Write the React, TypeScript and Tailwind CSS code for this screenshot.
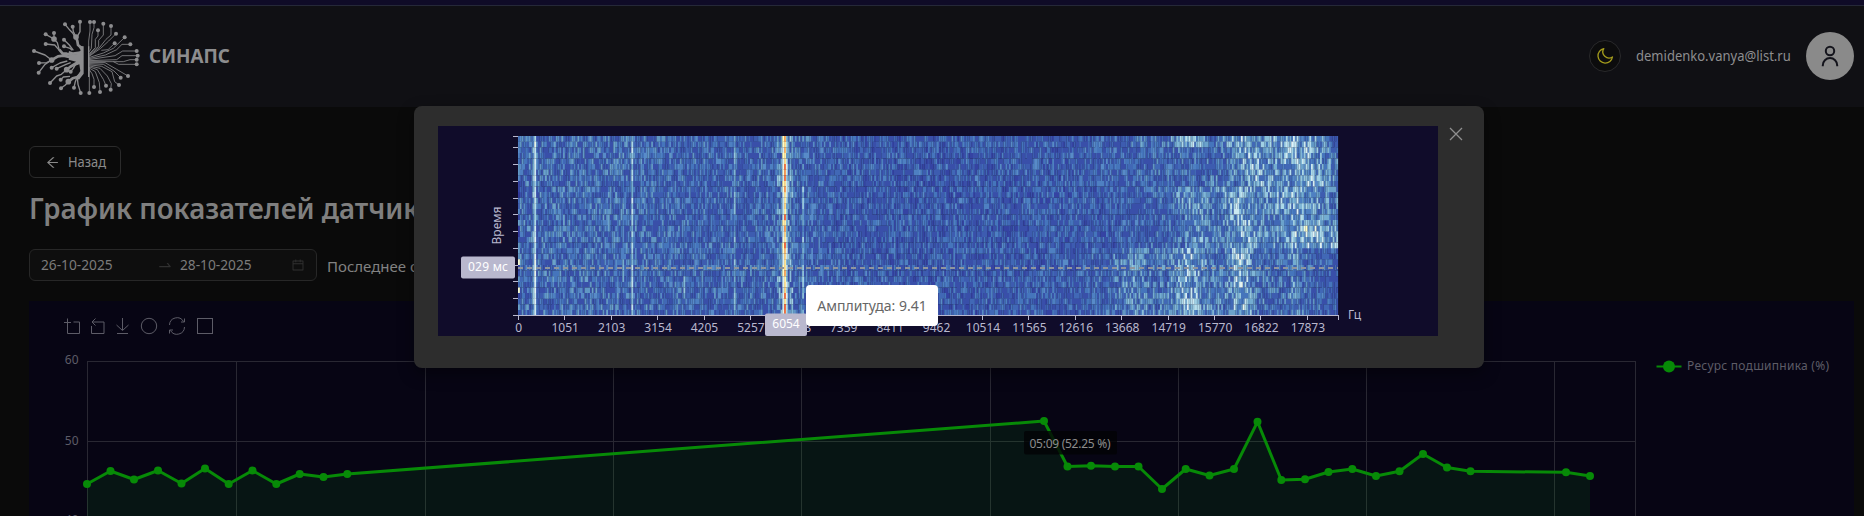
import { AiOutlineArrowLeft, AiOutlineCalendar, AiOutlineSwapRight } from "react-icons/ai";

const FONT = "font-['Noto_Sans','Open_Sans',sans-serif]";

/* ---------- heatmap ---------- */

const COLS = 456;
const ROWS = 32;
const PALETTE = [
  [49, 54, 149],
  [69, 117, 180],
  [116, 173, 209],
  [171, 217, 233],
  [224, 243, 248],
  [255, 255, 191],
  [254, 224, 144],
  [253, 174, 97],
  [244, 109, 67],
  [215, 48, 39],
];
const LEVELS = 45;

function levelColor(level: number) {
  const t = (level / LEVELS) * (PALETTE.length - 1);
  const i = Math.min(Math.floor(t), PALETTE.length - 2);
  const f = t - i;
  const c = PALETTE[i].map((v, k) => Math.round(v + (PALETTE[i + 1][k] - v) * f));
  // the low end of the scale is a little more saturated
  if (t < 1.5) c[2] = Math.min(255, c[2] + 8);
  return `rgb(${c.join(",")})`;
}

const bell = (x: number, center: number, width: number) =>
  Math.exp(-((x - center) ** 2) / (2 * width * width));

// x is counted in pixels from the left edge of the grid
function energy(x: number, row: number) {
  let e = 0.68 + 0.26 * bell(x, 60, 100) + 0.14 * bell(x, 265, 30);
  if (row < 9) {
    e += 0.4 * bell(x, 770, 100);
    e += 0.9 * bell(x, 722 + row * 2.4, 12);
    e += 1.0 * bell(x, 772 + row * 2.6, 18);
    if (row < 2) e += 1.3 * bell(x, 670, 11) + 0.6 * bell(x, 622, 4);
  } else if (row < 20) {
    const r = row - 9;
    e += 0.5 * bell(x, 760, 75);
    e += 0.9 * bell(x, 716 + r * 1.4, 11);
    e += 0.9 * bell(x, 772 + r * 2.2, 17);
    e += 0.5 * bell(x, 668 + r * 1.5, 12);
    if (r > 6) e += 0.6 * bell(x, 800, 20);
  } else {
    e += 0.45 * bell(x, 690, 65);
    e += 1.0 * bell(x, 670, 10);
    e += 1.2 * bell(x, 722, 7);
    e += 0.45 * bell(x, 612, 12) + 0.5 * bell(x, 776, 6);
  }
  return e;
}

function buildHeatmap() {
  let seed = 20251026;
  const rand = () => {
    seed = (seed * 1664525 + 1013904223) >>> 0;
    return seed / 4294967296;
  };
  const w = 820 / COLS;
  const h = 179.4 / ROWS;
  const paths: string[] = Array.from({ length: LEVELS + 1 }, () => "");
  const at = (px: number) => Math.round(px / w);
  const peak = at(267);
  for (let row = 0; row < ROWS; row++) {
    for (let col = 0; col < COLS; col++) {
      const x = col * w;
      let v = energy(x, row) * (0.36 + 1.4 * Math.pow(rand(), 1.8)) * 0.125;
      const n = rand();
      if (col === at(17)) v = 0.3 + n * 0.18;
      if (col === at(17) - 1) v = 0.12 + n * 0.2;
      if (col === at(112.5)) v = 0.18 + n * 0.22;
      if (col === at(104) && row > 10 && row < 26) v = 0.12 + n * 0.14;
      if (col === at(216.5)) v = 0.12 + n * 0.18;
      if (col === at(166) && row > 24 && row < 29) v = 0.2 + n * 0.1;
      if (col === at(284) && row > 6) v = 0.08 + n * 0.24;
      if (Math.abs(col - peak) > 1 && Math.abs(col - peak) < 5 && n > 0.5) v += 0.14;
      if (col === peak - 1) v = 0.36 + n * 0.24;
      if (col === peak) v = 0.6 + n * n * 0.34;
      if (col === peak + 1) v = 0.16 + n * 0.28;
      if (col === 0) v = row === 22 || row === 27 ? 0.5 : 0.2 * n;
      const level = Math.min(LEVELS, Math.round(Math.min(v, 1) * LEVELS));
      paths[level] += `M${x.toFixed(1)} ${(row * h).toFixed(1)}h${(w + 0.1).toFixed(1)}v${(h + 0.1).toFixed(1)}h-${(w + 0.1).toFixed(1)}z`;
    }
  }
  return paths;
}

const HEATMAP = buildHeatmap();

const FREQS = [
  0, 1051, 2103, 3154, 4205, 5257, 6308, 7359, 8411, 9462, 10514, 11565, 12616, 13668, 14719, 15770,
  16822, 17873,
];
const TIME_TICKS = [136.5, 147.5, 164.5, 181.5, 198.5, 214.5, 231.5, 248.5, 265.5, 281.5, 298.5, 315.5];

function Spectrogram() {
  return (
    <svg className="block h-[210px] w-[1000px] shrink-0 bg-[#100c2a]" viewBox="438 126 1000 210">
      <g transform="translate(518 136)">
        {HEATMAP.map((d, i) => d && <path key={i} d={d} fill={levelColor(i)} />)}
      </g>
      <g stroke="#b9b8ce" strokeWidth="1">
        <path d="M518 315.5H1338.5" />
        {TIME_TICKS.map((y) => (
          <path key={y} d={`M513 ${y}h5`} />
        ))}
        {FREQS.map((f, i) => (
          <path key={f} d={`M${Math.round(518 + i * 46.4) + 0.5} 315v5`} />
        ))}
        <path d="M1338.5 315v5" />
      </g>
      <path d="M518 268H1338" stroke="#8f959e" strokeWidth="2" strokeDasharray="5 4" />
      <g fill="#b9b8ce" fontSize="12">
        {FREQS.map((f, i) => (
          <text key={f} x={518.8 + i * 46.42} y="332" textAnchor="middle">
            {f}
          </text>
        ))}
        <text x="1348" y="318.5">Гц</text>
        <text x="500.5" y="225.5" textAnchor="middle" transform="rotate(-90 500.5 225.5)">
          Время
        </text>
      </g>
      <rect x="461" y="256.5" width="54" height="22" rx="2" fill="#b9b8ce" />
      <text x="488" y="270.5" fontSize="12" fill="#fff" textAnchor="middle" textLength="40">
        029 мс
      </text>
      <rect x="765" y="313.5" width="42" height="22.5" rx="2" fill="#b9b8ce" />
      <text x="786" y="328" fontSize="12" fill="#fff" textAnchor="middle">
        6054
      </text>
    </svg>
  );
}

/* ---------- resource chart ---------- */

const POINTS = [
  [87, 484], [110.5, 471], [134, 479.5], [158, 470.5], [181.5, 483.5], [205, 468.5], [228.7, 484],
  [252.5, 470.5], [276.3, 484], [299.7, 474], [323.5, 477], [347.3, 474], [1044, 421], [1067.5, 466.5],
  [1091, 465.8], [1115, 466.5], [1138.5, 466.5], [1162, 489], [1185.7, 469], [1209.5, 475.5],
  [1234, 469], [1257.5, 421.8], [1281.3, 480], [1305, 479.3], [1328.5, 472], [1352.3, 469],
  [1376, 476], [1399.5, 471.2], [1423, 454], [1447, 467.5], [1470.5, 471.3], [1566, 472.3], [1590, 476],
];
const LINE = POINTS.map((p) => p.join(",")).join(" ");
const GRID_X = [87.5, 236.5, 425.5, 613.5, 801.5, 990.5, 1178.5, 1366.5, 1554.5, 1635.5];

function ResourceChart() {
  return (
    <svg className="block h-[215px] w-[1825px] bg-[#070514]" viewBox="29 301 1825 215">
      <g fill="none" stroke="#5d5c67" strokeWidth="1">
        <path d="M67.5 318.5v15h12v-11.5h-6M64 322.5h7" />
        <path d="M91.5 326v7.5h12.5v-11.5h-12M95.5 318.5l-3.5 3.5l3.5 3.5" />
        <path d="M117 333.5h11M122.5 318v12M116.5 325l6 5.5l6-5.5" />
        <circle cx="149" cy="326" r="7.7" />
        <path d="M169.5 325a7.5 7.5 0 0 1 14-3.5M184.500 327a7.5 7.5 0 0 1-14 3.5M184.500 318.5v3.5h-3.5M169.5 333.5v-3.5h3.5" />
        <rect x="197.5" y="318.5" width="15" height="15" />
      </g>
      <g stroke="#292833" strokeWidth="1">
        <path d="M87 361.5H1636M87 441.5H1636" />
        {GRID_X.map((x) => (
          <path key={x} d={`M${x} 361V516`} />
        ))}
      </g>
      <g fill="#5d5c67" fontSize="12" textAnchor="end">
        <text x="78.5" y="364">60</text>
        <text x="78.5" y="444.5">50</text>
        <text x="78.5" y="524">40</text>
      </g>
      <polygon points={`87,516 ${LINE} 1590,516`} fill="#0b8a1a" fillOpacity="0.12" />
      <polyline points={LINE} fill="none" stroke="#078a07" strokeWidth="3" strokeLinejoin="bevel" />
      {POINTS.map(([x, y]) => (
        <circle key={x} cx={x} cy={y} r="4" fill="#078a07" />
      ))}
      <rect x="1024" y="431" width="93" height="23.5" rx="2" fill="#020205" fillOpacity="0.8" />
      <text x="1070" y="448" fontSize="12" fill="#8c8c8c" textAnchor="middle" textLength="81">
        05:09 (52.25 %)
      </text>
      <path d="M1656.5 366.5h25" stroke="#078a07" strokeWidth="2" />
      <circle cx="1669" cy="366.5" r="6" fill="#078a07" />
      <text x="1687" y="370" fontSize="12" fill="#5d5c67" textLength="142">
        Ресурс подшипника (%)
      </text>
    </svg>
  );
}

/* ---------- header ---------- */

// tree branches on the left half: polyline and its end node
const BRANCHES = [
  "95,147 75,132 42,120",
  "118,118 112,95 102,84 77,70",
  "102,84 102,66",
  "118,118 104,102 77,99",
  "156,118 150,112 132,106",
  "160,118 148,102 132,86",
  "166,80 158,66 150,58 135,40",
  "168,78 160,62 158,47",
  "170,80 180,62 180,32",
  "95,147 80,155 57,156",
  "95,147 75,160 56,185",
  "142,150 120,156 95,170",
  "152,155 138,160 110,173",
  "140,176 124,190 110,195 90,216",
  "168,158 160,172 152,182",
  "145,212 136,222 123,232",
  "150,196 130,198 122,206",
  "172,196 166,212 162,230",
  "172,200 174,220 182,246",
];

// thick limbs that join the trunk
const LIMBS = [
  "186,132 160,134 140,128 128,128 118,116",
  "186,138 158,140 130,134 114,136 95,147",
  "186,124 160,128 146,124",
  "186,112 174,102 172,90 168,78",
  "186,150 166,158 150,168 140,176",
  "186,184 172,198 158,202 145,212",
];

// circuit traces on the right half
const TRACES = [
  "206,125 206,90 210,60 210,33",
  "208,122 214,112 216,70 222,50 222,33",
  "208,128 226,110 226,85 234,75 234,58",
  "208,131 236,106 236,88 250,72 250,38",
  "208,134 240,108 258,85 273,72 273,45",
  "206,137 242,112 266,90 288,68",
  "244,118 264,116 284,97",
  "206,140 250,126 280,112 314,79",
  "206,143 256,132 290,116 306,100 331,100",
  "206,146 285,134 308,120 350,120",
  "206,149 290,146 306,134 353,134",
  "206,152 310,152 330,146 350,146",
  "280,152 296,160 350,160",
  "206,155 255,155 290,175 324,195",
  "206,158 250,160 282,180 302,200",
  "206,161 245,166 276,182 284,212 297,222",
  "206,164 240,172 262,195 274,218 272,236",
  "206,167 232,176 250,205 258,224",
  "206,170 226,182 238,215 240,243",
  "206,173 216,188 222,205 222,228",
  "208,168 208,246",
];

function Logo() {
  return (
    <svg className="h-[90px] w-[130px] text-[#8d8d8f]" viewBox="0 0 390 270" fill="currentColor">
      <g fill="none" stroke="currentColor" strokeLinejoin="round">
        {BRANCHES.map((p) => (
          <polyline key={p} points={p} strokeWidth="4" />
        ))}
        {LIMBS.map((p) => (
          <polyline key={p} points={p} strokeWidth="8" />
        ))}
        {TRACES.map((p) => (
          <polyline key={p} points={p} strokeWidth="2.4" />
        ))}
      </g>
      <path d="M191 106v82l-14 18-8-6 12-20-3-20-22 8 12-16-22-6 2-12 24-2-6-8 10 2 6-8-8-14z" />
      <path d="M204 106h4v92h-4z" />
      {[...BRANCHES, ...TRACES].map((p) => {
        const [cx, cy] = p.split(" ").pop()!.split(",");
        return <circle key={p} cx={cx} cy={cy} r="6" />;
      })}
      {[[102, 84], [95, 147], [168, 78], [140, 176], [145, 212]].map(([cx, cy]) => (
        <circle key={cx} cx={cx} cy={cy} r="8.5" />
      ))}
    </svg>
  );
}

function Header() {
  return (
    <header className="flex h-[107px] items-center border-t-[5px] border-[#0f0b27] bg-[#101014] pr-2.5 pl-5 shadow-[inset_0_1px_0_#252838]">
      <Logo />
      <span className="-ml-px origin-left scale-x-[0.94] text-xl font-bold text-[#8d8d8f]">СИНАПС</span>
      <div className="ml-auto flex items-center">
        <button className="mr-[15px] flex size-8 items-center justify-center rounded-full border border-[#29292b] bg-[#0c0c0d] text-[#a39b1c]">
          <svg className="size-[18px]" viewBox="0 0 18 18" fill="none" stroke="currentColor" strokeWidth="1.3">
            <path d="M7.8 1.6A7.3 7.3 0 1 0 16.5 10A6.2 6.2 0 0 1 7.8 1.6Z" strokeLinejoin="round" />
          </svg>
        </button>
        <span className="mr-[15px] w-[155px] text-sm whitespace-nowrap text-[#8d8d8f]">
          <span className="inline-block origin-left scale-x-[0.93]">demidenko.vanya@list.ru</span>
        </span>
        <div className="flex size-12 items-center justify-center rounded-full bg-[#8a8a8a] text-[#14141c]">
          <svg className="size-6" viewBox="0 0 24 24" fill="none" stroke="currentColor" strokeWidth="2">
            <circle cx="12" cy="7" r="4.2" />
            <path d="M4.8 22.3v-1a7.2 7.2 0 0 1 14.4 0v1" />
          </svg>
        </div>
      </div>
    </header>
  );
}

function Toolbar() {
  return (
    <div className="flex h-8 items-center">
      <div className="flex h-8 w-72 items-center rounded-md border border-[#272727] bg-[#0e0e0e] px-[11px] text-sm text-[#7b7b7b]">
        <span className="w-[116px] origin-left scale-x-[0.98]">26-10-2025</span>
        <AiOutlineSwapRight className="mr-[7px] size-4 text-[#303030]" />
        <span className="origin-left scale-x-[0.98]">28-10-2025</span>
        <AiOutlineCalendar className="ml-auto size-3.5 text-[#303030]" />
      </div>
      <span className="mt-0.5 ml-2.5 text-[15px] text-[#828282]">Последнее обновление</span>
    </div>
  );
}

function SpectrogramModal() {
  return (
    <div className="absolute top-[106px] left-[414px] flex h-[262px] w-[1070px] rounded-lg bg-[#2d2d2d] py-5 pl-6 shadow-[0_6px_16px_rgba(0,0,0,0.4)]">
      <Spectrogram />
      <button className="ml-[11px] flex h-4 w-4 items-center text-[#8f8f8f]">
        <svg className="size-3.5" viewBox="0 0 14 14" stroke="currentColor" strokeWidth="1.3">
          <path d="M1 1l12 12M13 1L1 13" />
        </svg>
      </button>
      <div className="absolute top-[179px] left-[392px] flex h-[41px] w-[132px] items-center justify-center rounded bg-white text-sm whitespace-nowrap text-[#666]">
        Амплитуда: 9.41
      </div>
    </div>
  );
}

export default function App() {
  return (
    <div className={`relative h-[516px] w-[1864px] overflow-hidden bg-[#0a0a0a] ${FONT}`}>
      <Header />
      <main className="flex flex-col items-start pt-[39px] pl-[29px]">
        <button className="flex h-8 w-[92px] items-center gap-2 rounded-md border border-[#2b2b2b] pl-[15px] text-sm text-[#8a8a8a]">
          <AiOutlineArrowLeft className="size-[15px]" />
          <span className="origin-left scale-x-[0.92]">Назад</span>
        </button>
        <h2 className="mt-2.5 mb-[21px] origin-left scale-x-[0.985] text-[28px] leading-10 font-semibold whitespace-nowrap text-[#7f7f7f]">
          График показателей датчика
        </h2>
        <Toolbar />
        <div className="mt-5">
          <ResourceChart />
        </div>
      </main>
      <SpectrogramModal />
    </div>
  );
}
